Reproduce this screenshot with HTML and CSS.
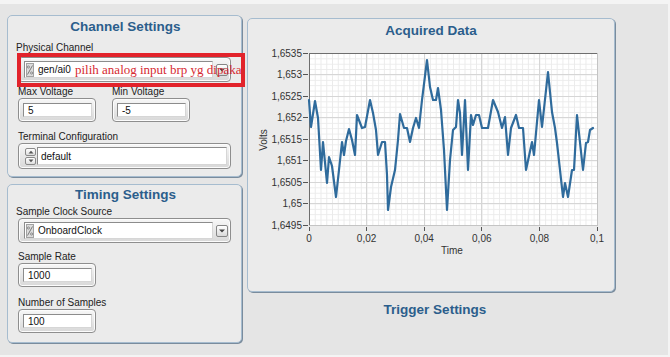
FILE: index.html
```html
<!DOCTYPE html>
<html>
<head>
<meta charset="utf-8">
<link rel="stylesheet" href="styles.css">
</head>
<body>
<div class="screen">
  <div class="col-left">
    <section class="panel channel">
      <h2 class="title">Channel Settings</h2>
      <div class="phys">
        <span class="lbl shift">Physical Channel</span>
        <div class="combo">
          <div class="box">
            <svg class="io" width="8" height="14" viewBox="0 0 8 14"><rect x="0.5" y="0.5" width="7" height="13" fill="#dcdcdc" stroke="#a2a2a2"/><path d="M1.5 11.5 L6.5 2.5" stroke="#7a7a7a" stroke-width="1"/><circle cx="2.4" cy="4" r="1.1" fill="none" stroke="#7a7a7a" stroke-width="0.8"/><circle cx="5.6" cy="10" r="1.1" fill="none" stroke="#7a7a7a" stroke-width="0.8"/></svg>
            <span>gen/ai0</span>
          </div>
          <div class="ddbtn"><svg width="8" height="6" viewBox="0 0 8 6"><path d="M1 1.5 H7 L4 4.5 Z" fill="#444"/></svg></div>
        </div>
        <div class="annot-box"></div>
        <span class="annot-text">pilih analog input brp yg dipakai</span>
      </div>
      <div class="row">
        <div class="field">
          <span class="lbl">Max Voltage</span>
          <div class="num"><div class="box">5</div></div>
        </div>
        <div class="field">
          <span class="lbl">Min Voltage</span>
          <div class="num"><div class="box">-5</div></div>
        </div>
      </div>
      <div class="term">
        <span class="lbl">Terminal Configuration</span>
        <div class="spinfield">
          <div class="spin">
            <div class="sbtn"><svg width="6" height="4" viewBox="0 0 6 4"><path d="M0.5 3.5 H5.5 L3 0.8 Z" fill="#555"/></svg></div>
            <div class="sbtn"><svg width="6" height="4" viewBox="0 0 6 4"><path d="M0.5 0.5 H5.5 L3 3.2 Z" fill="#555"/></svg></div>
          </div>
          <div class="box">default</div>
        </div>
      </div>
    </section>
    <section class="panel timing">
      <h2 class="title t2">Timing Settings</h2>
      <span class="lbl shift first">Sample Clock Source</span>
      <div class="combo">
        <div class="box">
          <svg class="io" width="8" height="14" viewBox="0 0 8 14"><rect x="0.5" y="0.5" width="7" height="13" fill="#dcdcdc" stroke="#a2a2a2"/><path d="M1.5 11.5 L6.5 2.5" stroke="#7a7a7a" stroke-width="1"/><circle cx="2.4" cy="4" r="1.1" fill="none" stroke="#7a7a7a" stroke-width="0.8"/><circle cx="5.6" cy="10" r="1.1" fill="none" stroke="#7a7a7a" stroke-width="0.8"/></svg>
          <span>OnboardClock</span>
        </div>
        <div class="ddbtn"><svg width="8" height="6" viewBox="0 0 8 6"><path d="M1 1.5 H7 L4 4.5 Z" fill="#444"/></svg></div>
      </div>
      <span class="lbl gap8">Sample Rate</span>
      <div class="num"><div class="box">1000</div></div>
      <span class="lbl gap10">Number of Samples</span>
      <div class="num"><div class="box">100</div></div>
    </section>
  </div>
  <div class="col-right">
    <section class="panel graph">
      <h2 class="title g">Acquired Data</h2>
      <svg class="chart" width="366" height="250" viewBox="248 41 366 250">
        <defs>
          <pattern id="minor" x="309" y="53" width="5.76" height="5.375" patternUnits="userSpaceOnUse">
            <path d="M0.5 0 V5.375 M0 0.5 H5.76" stroke="#ebebeb" stroke-width="1" fill="none"/>
          </pattern>
        </defs>
        <rect x="309" y="53" width="288" height="172" fill="#fff"/>
        <rect x="309" y="53" width="288" height="172" fill="url(#minor)"/>
        <g stroke="#d6d6d6" stroke-width="1" shape-rendering="crispEdges">
          <path d="M366.6 53 V225 M424.2 53 V225 M481.8 53 V225 M539.4 53 V225"/>
          <path d="M309 74.5 H597 M309 96 H597 M309 117.5 H597 M309 139 H597 M309 160.5 H597 M309 182 H597 M309 203.5 H597"/>
        </g>
        <path d="M597 53 V225 H309" stroke="#c4c4c4" fill="none" shape-rendering="crispEdges"/>
        <path d="M309 225 V53 H597" stroke="#6e6e6e" fill="none" shape-rendering="crispEdges"/>
        <g stroke="#555" stroke-width="1" shape-rendering="crispEdges">
          <path d="M303 53 H308 M303 74.5 H308 M303 96 H308 M303 117.5 H308 M303 139 H308 M303 160.5 H308 M303 182 H308 M303 203.5 H308 M303 225 H308"/>
          <path d="M309 227 V231 M366.6 227 V231 M424.2 227 V231 M481.8 227 V231 M539.4 227 V231 M597 227 V231"/>
        </g>
        <g class="axis" text-anchor="end">
          <text x="302" y="56.5">1,6535</text>
          <text x="302" y="78">1,653</text>
          <text x="302" y="99.5">1,6525</text>
          <text x="302" y="121">1,652</text>
          <text x="302" y="142.5">1,6515</text>
          <text x="302" y="164">1,651</text>
          <text x="302" y="185.5">1,6505</text>
          <text x="302" y="207">1,65</text>
          <text x="302" y="228.5">1,6495</text>
        </g>
        <g class="axis" text-anchor="middle">
          <text x="309" y="242">0</text>
          <text x="366.6" y="242">0,02</text>
          <text x="424.2" y="242">0,04</text>
          <text x="481.8" y="242">0,06</text>
          <text x="539.4" y="242">0,08</text>
          <text x="597" y="242">0,1</text>
          <text x="452" y="254">Time</text>
          <text x="0" y="0" transform="translate(267 140) rotate(-90)">Volts</text>
        </g>
        <polyline class="trace" points="309,100 311,127 315,101 318,118 321,170 323,142 327,183 329,157 332,166 336,197 339,170 342,142 344,155 346,141 349,129 352,140 355,155 357,115 362,128 365,127 370,100 373,113 376,130 378,155 382,142 385,142 387,175 388,210 391,187 395,170 398,140 400,114 404,128 407,128 410,142 413,128 416,118 419,128 422,100 427,60 430,87 433,100 436,100 438,88 441,110 444,150 447,210 450,160 453,130 456,127 458,100 460,113 462,155 465,100 468,170 471,115 473,125 476,115 479,115 482,128 488,128 493,100 498,112 502,128 505,117 508,155 511,128 516,115 519,128 523,128 526,170 532,142 534,155 539,100 542,127 548,72 552,112 555,128 557,143 563,197 565,183 568,197 572,170 574,170 577,115 583,170 586,143 588,142 590,130 593,128"/>
      </svg>
    </section>
    <h2 class="title trigger">Trigger Settings</h2>
  </div>
</div>
</body>
</html>
```

FILE: styles.css
```css
html, body {
  margin: 0;
  padding: 0;
}
body {
  background: #f4f4f4;
  font-family: "Liberation Sans", Arial, sans-serif;
  color: #222;
}
.screen {
  margin-top: 4px;
  width: 668px;
  height: 351px;
  box-sizing: border-box;
  background: #e5e5e5;
  display: flex;
  gap: 5px;
  padding: 11px 0 0 7px;
}
.col-left {
  width: 235px;
  display: flex;
  flex-direction: column;
  gap: 7px;
}
.col-right {
  width: 368px;
  margin-top: 3px;
  display: flex;
  flex-direction: column;
}
.panel {
  box-sizing: border-box;
  border: 1px solid #a6bccf;
  border-radius: 5px;
  background: #ebebeb;
  box-shadow: 1px 1px 0 #7a8c9d;
}
.channel {
  height: 162px;
  padding: 0 8px 0 10px;
  position: relative;
}
.timing {
  height: 159px;
  padding: 0 8px 0 10px;
  display: flex;
  flex-direction: column;
  align-items: flex-start;
}
.graph {
  height: 274px;
}
.title {
  margin: 1px 0 0;
  font-size: 13.5px;
  line-height: 20px;
  font-weight: bold;
  color: #2b5e8c;
  text-align: center;
}
.title.t2 {
  margin-top: 0;
  align-self: stretch;
}
.title.g {
  margin-top: 2px;
}
.title.trigger {
  margin: 8px 0 0 8px;
}
.lbl {
  display: block;
  font-size: 10px;
  line-height: 12px;
  color: #222;
  white-space: nowrap;
}
.lbl.shift {
  margin-left: -2px;
}
.lbl.first {
  margin-top: 1px;
}
.lbl.gap8 {
  margin-top: 8px;
}
.lbl.gap10 {
  margin-top: 10px;
}
.phys {
  margin-top: 5px;
  position: relative;
}
.phys .combo {
  margin-top: 3px;
}
.combo {
  box-sizing: border-box;
  width: 213px;
  height: 25px;
  display: flex;
  align-items: center;
  gap: 3px;
  padding: 0 2px 0 5px;
  border: 1px solid #8e8e8e;
  border-radius: 4px;
  background: linear-gradient(#f7f7f7, #d8d8d8);
  box-shadow: inset 0 0 0 1px #fcfcfc;
}
.box {
  box-sizing: border-box;
  background: #fff;
  border: 1px solid;
  border-color: #8c8c8c #d6d6d6 #d6d6d6 #8c8c8c;
  font-size: 10px;
  color: #111;
  display: flex;
  align-items: center;
  white-space: nowrap;
}
.combo .box {
  flex: 1;
  height: 17px;
  gap: 4px;
  padding-left: 1px;
}
.io {
  display: block;
}
.ddbtn {
  box-sizing: border-box;
  width: 12px;
  height: 12px;
  border: 1px solid #858585;
  border-radius: 2px;
  background: linear-gradient(#ffffff, #d9d9d9);
  display: flex;
  align-items: center;
  justify-content: center;
}
.annot-box {
  position: absolute;
  left: -1px;
  top: 11px;
  width: 228px;
  height: 34px;
  box-sizing: border-box;
  border: 4px solid #e2232b;
}
.annot-text {
  position: absolute;
  left: 57px;
  top: 21px;
  font-family: "Liberation Serif", "Times New Roman", serif;
  font-size: 13px;
  line-height: 14px;
  color: #d62a31;
  white-space: nowrap;
}
.row {
  display: flex;
  gap: 16px;
  margin-top: 4px;
}
.num {
  box-sizing: border-box;
  width: 78px;
  height: 24px;
  padding: 4px 3px 4px 4px;
  border: 1px solid #8e8e8e;
  border-radius: 4px;
  background: linear-gradient(#f7f7f7, #d8d8d8);
  box-shadow: inset 0 0 0 1px #fcfcfc;
}
.num .box {
  height: 100%;
  padding-left: 4px;
}
.term {
  margin-top: 9px;
}
.spinfield {
  box-sizing: border-box;
  width: 213px;
  height: 26px;
  display: flex;
  align-items: center;
  gap: 1px;
  padding: 0 3px 0 6px;
  border: 1px solid #8e8e8e;
  border-radius: 4px;
  background: linear-gradient(#f7f7f7, #d8d8d8);
  box-shadow: inset 0 0 0 1px #fcfcfc;
}
.spin {
  display: flex;
  flex-direction: column;
  gap: 1px;
}
.sbtn {
  box-sizing: border-box;
  width: 11px;
  height: 8px;
  border: 1px solid #8a8a8a;
  border-radius: 2px;
  background: linear-gradient(#ffffff, #dedede);
  display: flex;
  align-items: center;
  justify-content: center;
}
.spinfield .box {
  flex: 1;
  height: 18px;
  padding-left: 3px;
}
.chart {
  display: block;
}
.axis {
  font-family: "Liberation Sans", Arial, sans-serif;
  font-size: 10px;
  fill: #333;
}
.trace {
  fill: none;
  stroke: #2f6b9c;
  stroke-width: 2.2;
  stroke-linejoin: round;
  stroke-linecap: round;
}
```
